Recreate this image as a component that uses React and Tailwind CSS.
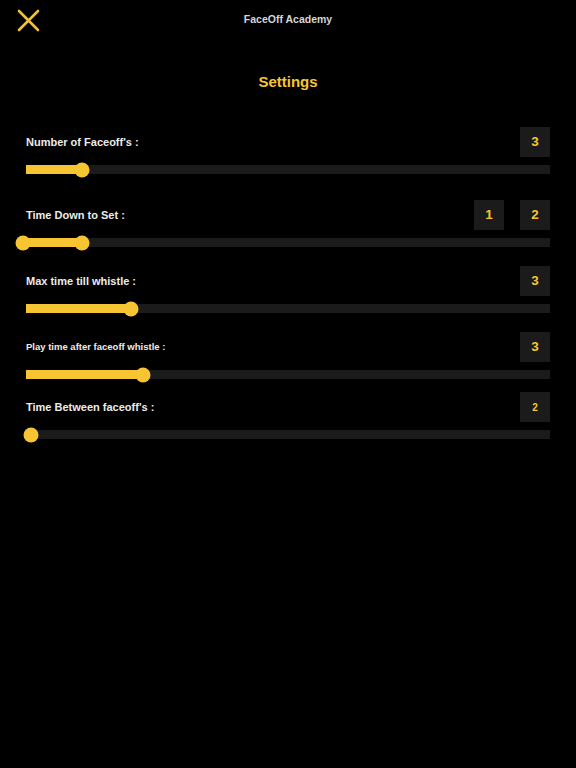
import React from 'react';

const yellow = 'bg-[#f6c531]';

function Box({ value, small }) {
  return (
    <div className="w-[30px] h-[30px] bg-[#1b1b1b] flex items-center justify-center">
      <span className={`${small ? 'text-[10px]' : 'text-[13.5px]'} font-bold text-[#f6c531]`}>{value}</span>
    </div>
  );
}

function Track({ from = 26, to }) {
  // from / to are page x coords for fill start / thumb
  const left = from - 26;
  const right = to - 26;
  return (
    <div className="relative h-[9px] bg-[#1b1b1b]">
      <div className={`absolute top-0 h-full ${yellow}`} style={{ left, width: right - left }} />
      {from !== 26 && (
        <div className={`absolute top-1/2 -translate-y-1/2 -translate-x-1/2 w-[15px] h-[15px] rounded-full ${yellow}`} style={{ left }} />
      )}
      <div className={`absolute top-1/2 -translate-y-1/2 -translate-x-1/2 w-[15px] h-[15px] rounded-full ${yellow}`} style={{ left: right }} />
    </div>
  );
}

function Row({ label, labelSize, values, from, to, mt, smallBox }) {
  return (
    <div className={mt}>
      <div className="flex items-center justify-between h-[30px]">
        <span className={`${labelSize} font-bold text-[#ececec]`}>{label}</span>
        <div className="flex gap-4">
          {values.map((v, i) => (
            <Box key={i} value={v} small={smallBox} />
          ))}
        </div>
      </div>
      <div className="mt-[8px]">
        <Track from={from} to={to} />
      </div>
    </div>
  );
}

export default function App() {
  return (
    <div className="w-[576px] h-[768px] bg-black overflow-hidden" style={{ fontFamily: '"Liberation Sans", Arial, sans-serif' }}>
      <div className="grid grid-cols-[1fr_auto_1fr] items-center h-[39px]">
        <div className="pl-[17px] pt-[1px]">
          <svg width="23" height="23" viewBox="0 0 23 23">
            <path d="M2 2 L21 21 M21 2 L2 21" stroke="#f2c230" strokeWidth="2.6" strokeLinecap="round" />
          </svg>
        </div>
        <div className="text-[10.5px] font-bold text-[#d6d6d6]">FaceOff Academy</div>
        <div />
      </div>
      <div className="mt-[33px] text-center text-[15px] leading-[20px] font-bold text-[#f6c531]">Settings</div>
      <div className="px-[26px]">
        <Row mt="mt-[35px]" label="Number of Faceoff's :" labelSize="text-[11px]" values={['3']} to={82} />
        <Row mt="mt-[26px]" label="Time Down to Set :" labelSize="text-[11px]" values={['1', '2']} from={23} to={82} />
        <Row mt="mt-[19px]" label="Max time till whistle :" labelSize="text-[11px]" values={['3']} to={131} />
        <Row mt="mt-[19px]" label="Play time after faceoff whistle :" labelSize="text-[9.5px]" values={['3']} to={143} />
        <Row mt="mt-[13px]" label="Time Between faceoff's :" labelSize="text-[11px]" values={['2']} to={31} smallBox />
      </div>
    </div>
  );
}
